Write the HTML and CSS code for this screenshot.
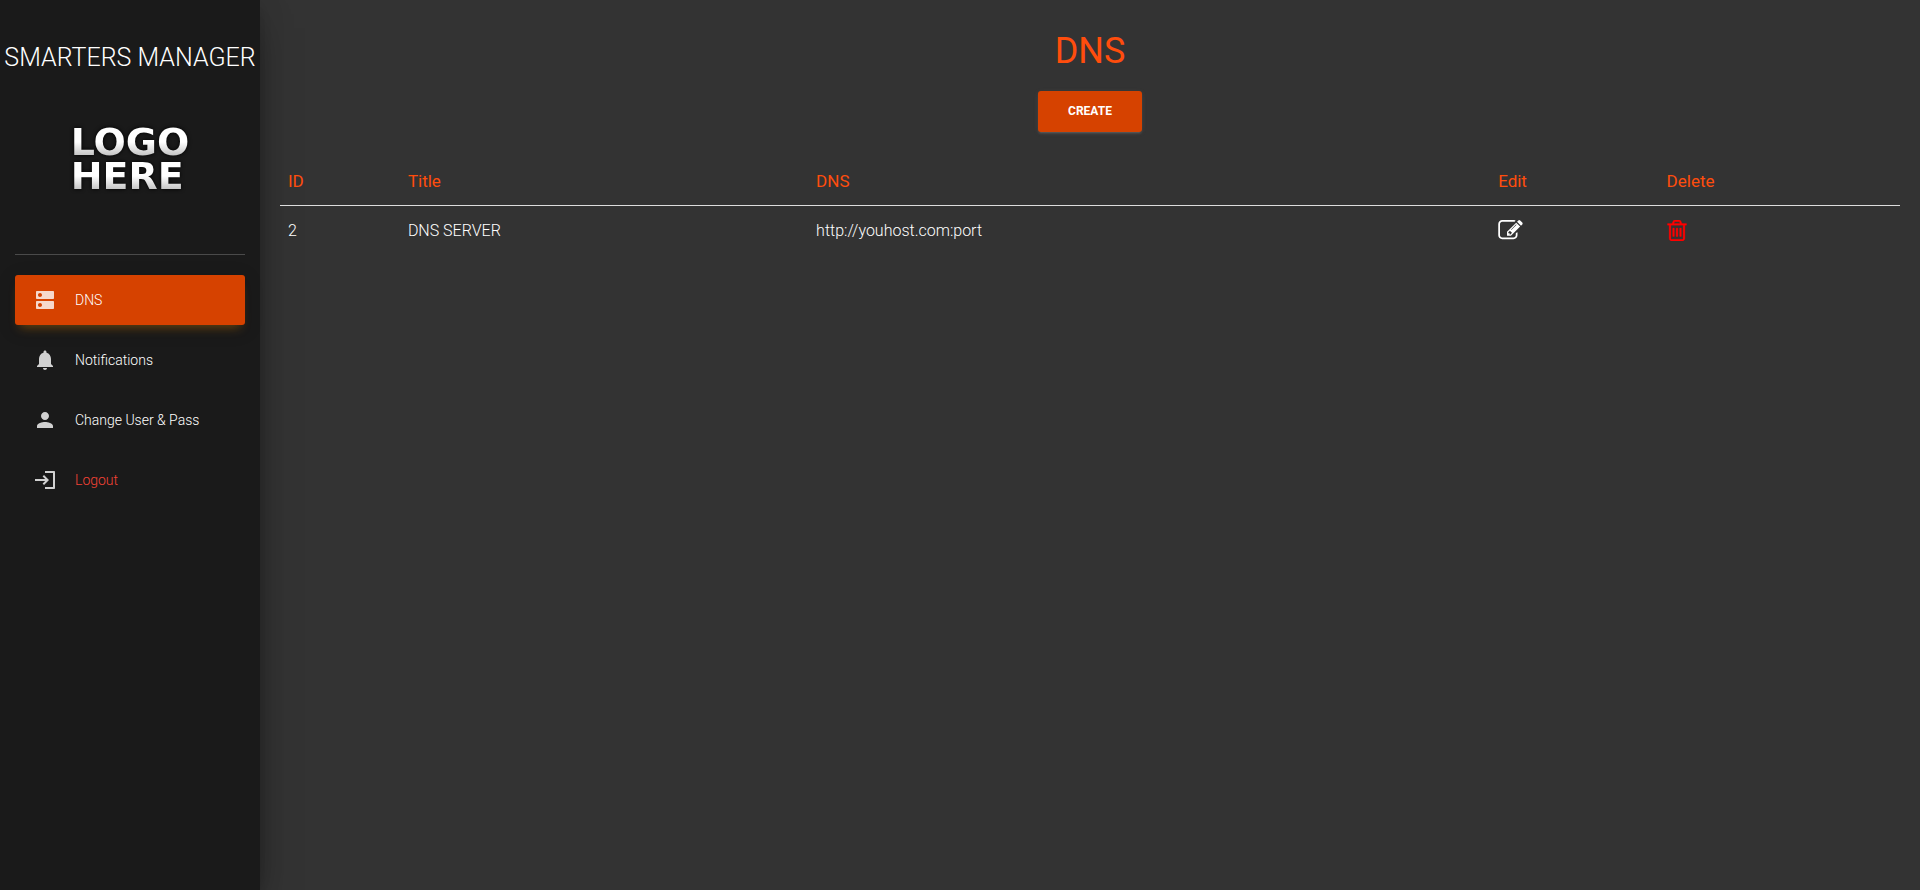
FILE: index.html
```html
<!DOCTYPE html>
<html lang="en">
<head>
<meta charset="utf-8">
<title>Smarters Manager</title>
<link rel="stylesheet" href="styles.css">
</head>
<body>
<div class="layout">
  <aside class="sidebar">
    <div class="brand">SMARTERS MANAGER</div>
    <div class="logo"><span class="logo-text">LOGO<br>HERE</span></div>
    <nav class="menu">
      <a class="item active" href="#"><svg class="icon" viewBox="0 0 24 24"><path d="M20 13H4c-.55 0-1 .45-1 1v6c0 .55.45 1 1 1h16c.55 0 1-.45 1-1v-6c0-.55-.45-1-1-1zM7 19c-1.1 0-2-.9-2-2s.9-2 2-2 2 .9 2 2-.9 2-2 2zM20 3H4c-.55 0-1 .45-1 1v6c0 .55.45 1 1 1h16c.55 0 1-.45 1-1V4c0-.55-.45-1-1-1zM7 9c-1.1 0-2-.9-2-2s.9-2 2-2 2 .9 2 2-.9 2-2 2z"/></svg>DNS</a>
      <a class="item" href="#"><svg class="icon" viewBox="0 0 24 24"><path d="M12 22c1.1 0 2-.9 2-2h-4c0 1.1.89 2 2 2zm6-6v-5c0-3.07-1.64-5.64-4.5-6.32V4c0-.83-.67-1.5-1.5-1.5s-1.5.67-1.5 1.5v.68C7.63 5.36 6 7.92 6 11v5l-2 2v1h16v-1l-2-2z"/></svg>Notifications</a>
      <a class="item" href="#"><svg class="icon" viewBox="0 0 24 24"><path d="M12 12c2.21 0 4-1.79 4-4s-1.79-4-4-4-4 1.79-4 4 1.79 4 4 4zm0 2c-2.67 0-8 1.34-8 4v2h16v-2c0-2.66-5.33-4-8-4z"/></svg>Change User &amp; Pass</a>
      <a class="item logout" href="#"><svg class="icon" viewBox="0 0 24 24"><path d="M11 7 9.6 8.4l2.6 2.6H2v2h10.200l-2.600 2.600L11 17l5-5-5-5zM20 19h-8v2h9c.6 0 1-.4 1-1V4c0-.6-.4-1-1-1h-9v2h8v14z"/></svg>Logout</a>
    </nav>
  </aside>
  <main class="content">
    <h1 class="heading">DNS</h1>
    <button class="create" type="button">CREATE</button>
    <table class="table">
      <colgroup><col class="col-id"><col class="col-title"><col class="col-dns"><col class="col-edit"><col></colgroup>
      <thead><tr><th>ID</th><th>Title</th><th>DNS</th><th>Edit</th><th>Delete</th></tr></thead>
      <tbody><tr>
        <td>2</td><td>DNS SERVER</td><td>http://youhost.com:port</td>
        <td><a class="action" href="#" aria-label="Edit"><svg class="edit-icon" viewBox="0 0 1792 1536"><path d="M888 1056l116-116-152-152-116 116v56h96v96h56zm440-720q-16-16-33 1L945 687q-17 17-1 33t33-1l350-350q17-17 1-33zm80 594v190q0 119-84.500 203.500T1120 1408H288q-119 0-203.500-84.500T0 1120V288Q0 169 84.500 84.500T288 0h832q63 0 117 25 15 7 18 23 3 17-9 29l-49 49q-14 14-32 8-23-6-45-6H288q-66 0-113 47t-47 113v832q0 66 47 113t113 47h832q66 0 113-47t47-113V994q0-13 9-22l64-64q15-15 35-7t20 29zm-96-738l288 288-672 672H640V864zm444 132l-92 92-288-288 92-92q28-28 68-28t68 28l152 152q28 28 28 68t-28 68z"/></svg></a></td>
        <td><a class="action delete" href="#" aria-label="Delete"><svg class="trash-icon" viewBox="0 0 1408 1536"><path d="M512 608v576q0 14-9 23t-23 9h-64q-14 0-23-9t-9-23V608q0-14 9-23t23-9h64q14 0 23 9t9 23zm256 0v576q0 14-9 23t-23 9h-64q-14 0-23-9t-9-23V608q0-14 9-23t23-9h64q14 0 23 9t9 23zm256 0v576q0 14-9 23t-23 9h-64q-14 0-23-9t-9-23V608q0-14 9-23t23-9h64q14 0 23 9t9 23zm128 724V384H256v948q0 22 7 40.500t14.500 27 10.500 8.500h832q3 0 10.500-8.500t14.500-27 7-40.500zM480 256h448l-48-117q-7-9-17-11H546q-10 2-17 11zm928 32v64q0 14-9 23t-23 9h-96v948q0 83-47 143.500t-113 60.500H288q-66 0-113-58.500T128 1336V384H32q-14 0-23-9t-9-23v-64q0-14 9-23t23-9h309l70-167q15-37 54-63t79-26h320q40 0 79 26t54 63l70 167h309q14 0 23 9t9 23z"/></svg></a></td>
      </tr></tbody>
    </table>
  </main>
</div>
</body>
</html>
```
FILE: styles.css
```css
* { box-sizing: border-box; }
body {
  margin: 0;
  background: #333;
  color: #fff;
  font-family: Roboto, "Liberation Sans", sans-serif;
  font-weight: 300;
}
.layout { display: flex; min-height: 100vh; }
.sidebar {
  flex: 0 0 260px;
  background: #1a1a1a;
  box-shadow: 0 16px 38px -12px rgba(0,0,0,.56), 0 4px 25px 0 rgba(0,0,0,.12), 0 8px 10px -5px rgba(0,0,0,.2);
}
.brand {
  padding-top: 43px;
  font-size: 25px;
  line-height: 30px;
  text-align: center;
  white-space: nowrap;
}
.logo {
  display: flex;
  justify-content: center;
  height: 182px;
  margin: 0 15px;
  padding-top: 52px;
  border-bottom: 1px solid #4a4a4a;
}
.logo-text {
  height: 68px;
  font: bold 38px/34px "DejaVu Sans", sans-serif;
  color: transparent;
  background: linear-gradient(#fff 0 25%, #bbb 48%, #fff 55% 75%, #bbb 98%);
  background-clip: text;
  -webkit-background-clip: text;
  filter: drop-shadow(0 0 2px #000);
}
.menu {
  display: flex;
  flex-direction: column;
  gap: 10px;
  padding: 20px 15px;
}
.item {
  display: flex;
  align-items: center;
  gap: 18px;
  height: 50px;
  padding: 0 18px;
  border-radius: 3px;
  color: #fff;
  font-size: 14px;
  line-height: 30px;
  text-decoration: none;
}
.active {
  background: #d64200;
  box-shadow: 0 4px 20px 0 rgba(0,0,0,.14), 0 7px 10px -5px rgba(255,152,0,.4);
}
.logout { color: #f44336; }
.icon { width: 24px; height: 24px; fill: #fff; opacity: .8; }
.content {
  flex: 1;
  display: flex;
  flex-direction: column;
  align-items: center;
  padding: 30px 20px;
}
.heading {
  margin: 0 0 19px;
  color: #ff4d0d;
  font-size: 36px;
  font-weight: 400;
  line-height: 42px;
}
.create {
  padding: 12px 30px;
  border: 0;
  border-radius: 3px;
  background: #d64200;
  box-shadow: 0 2px 2px 0 rgba(153,153,153,.14), 0 3px 1px -2px rgba(153,153,153,.2), 0 1px 5px 0 rgba(153,153,153,.12);
  color: #fff;
  font: bold 12px/17px Roboto, sans-serif;
}
.table {
  width: 100%;
  margin-top: 25px;
  border-spacing: 0;
  table-layout: fixed;
  font-size: 16px;
}
.table th, .table td { height: 49px; padding: 0 8px; text-align: left; }
.table th {
  border-bottom: 1px solid #ddd;
  color: #ff4d0d;
  font-size: 17px;
  font-weight: 400;
}
.col-id { width: 7.400%; }
.col-title { width: 25.200%; }
.col-dns { width: 42.100%; }
.col-edit { width: 10.400%; }
.action { display: flex; color: #fff; }
.delete { color: #f00; }
.edit-icon { width: 25px; height: 21px; fill: currentColor; }
.trash-icon { width: 20px; height: 21px; fill: currentColor; stroke: currentColor; stroke-width: 20; }
```
